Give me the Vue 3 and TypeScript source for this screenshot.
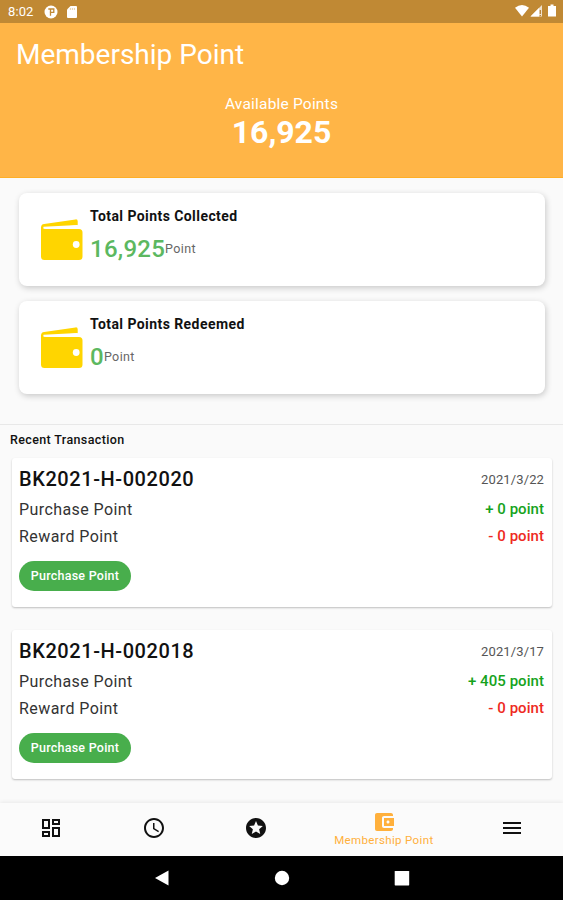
<script setup lang="ts">
interface Summary {
  title: string
  value: string
}

interface Transaction {
  code: string
  date: string
  purchase: string
  reward: string
}

interface NavItem {
  path: string
  label?: string
}

const summaries: Summary[] = [
  { title: 'Total Points Collected', value: '16,925' },
  { title: 'Total Points Redeemed', value: '0' },
]

const transactions: Transaction[] = [
  { code: 'BK2021-H-002020', date: '2021/3/22', purchase: '+ 0 point', reward: '- 0 point' },
  { code: 'BK2021-H-002018', date: '2021/3/17', purchase: '+ 405 point', reward: '- 0 point' },
]

const navItems: NavItem[] = [
  { path: 'M19 5v2h-4V5h4M9 5v6H5V5h4m10 8v6h-4v-6h4M9 17v2H5v-2h4M21 3h-8v6h8V3zM11 3H3v10h8V3zm10 8h-8v10h8V11zm-10 4H3v6h8v-6z' },
  { path: 'M11.99 2C6.47 2 2 6.48 2 12s4.47 10 9.99 10C17.52 22 22 17.52 22 12S17.52 2 11.99 2zM12 20c-4.42 0-8-3.58-8-8s3.58-8 8-8 8 3.58 8 8-3.58 8-8 8zm.5-13H11v6l5.25 3.15.75-1.23-4.5-2.67z' },
  { path: 'M11.99 2C6.47 2 2 6.48 2 12s4.47 10 9.99 10C17.52 22 22 17.52 22 12S17.52 2 11.99 2zm4.24 16L12 15.45 7.77 18l1.12-4.81-3.73-3.23 4.92-.42L12 5l1.92 4.53 4.92.42-3.73 3.23L16.23 18z' },
  {
    path: 'M21 18v1c0 1.1-.9 2-2 2H5c-1.11 0-2-.9-2-2V5c0-1.1.89-2 2-2h14c1.1 0 2 .9 2 2v1h-9c-1.11 0-2 .9-2 2v8c0 1.1.89 2 2 2h9zm-9-2h10V8H12v8zm4-2.5c-.83 0-1.5-.67-1.5-1.5s.67-1.5 1.5-1.5 1.5.67 1.5 1.5-.67 1.5-1.5 1.5z',
    label: 'Membership Point',
  },
  { path: 'M3 18h18v-2H3v2zm0-5h18v-2H3v2zm0-7v2h18V6H3z' },
]
</script>

<template>
  <div class="screen">
    <div class="status">
      <span class="time">8:02</span>
      <svg class="status-app" viewBox="0 0 14 14">
        <circle cx="7" cy="7" r="6.5" fill="#fff" />
        <path d="M4.300 4H9.800V7.300H6.500V10.800" fill="none" stroke="#c18a36" stroke-width="1.300" />
        <path d="M6.500 4v3.500" stroke="#c18a36" stroke-width="1.300" />
      </svg>
      <svg class="status-sd" viewBox="0 0 12 14">
        <path d="M4.5 1H10a1 1 0 0 1 1 1v10a1 1 0 0 1-1 1H2a1 1 0 0 1-1-1V4.5z" fill="#fff" />
        <path d="M4.4 3v2M6.4 3v2M8.4 3v2" stroke="#e0c59b" stroke-width=".8" />
      </svg>
      <svg class="status-right" viewBox="0 0 44 14">
        <path d="M1 3.800Q8-1.600 15 3.800L8 12.500z" fill="#fff" />
        <path d="M16.500 12.500 28 1v11.500z" fill="#fff" fill-opacity=".75" />
        <path d="M16.500 12.500 25 4v8.500z" fill="#fff" />
        <path d="M26.300 6v4M26.300 11v1" stroke="#b47c2c" stroke-width="1.200" />
        <path d="M36.500.500h3V2H42v10.500h-8V2h2.500z" fill="#fff" />
      </svg>
    </div>

    <header class="header">
      <h1 class="title">Membership Point</h1>
      <p class="available">Available Points</p>
      <p class="balance">16,925</p>
    </header>

    <section class="summaries">
      <article v-for="item in summaries" :key="item.title" class="summary">
        <svg class="wallet" viewBox="0 0 42 42">
          <path d="M0 8.500Q0 5.300 3.200 4.900L34.500 .4Q36.700 .1 36.700 2.300V6.300L2.500 9.300V10H38Q41.500 10 41.500 13.500V37.500Q41.500 41 38 41H3.500Q0 41 0 37.500z" fill="#ffd500" />
          <path d="M2.500 7.800 36.700 6v3.500H4Q1.800 9.500 2.500 7.800z" fill="#fff" />
          <circle cx="35.200" cy="25.500" r="3.400" fill="#fff" />
        </svg>
        <div class="summary-text">
          <h2 class="summary-title">{{ item.title }}</h2>
          <p class="summary-line"><span class="summary-value">{{ item.value }}</span><span class="unit">Point</span></p>
        </div>
      </article>
    </section>

    <section class="recent">
      <h3 class="recent-title">Recent Transaction</h3>
      <article v-for="tx in transactions" :key="tx.code" class="tx">
        <div class="row head"><span class="code">{{ tx.code }}</span><span class="date">{{ tx.date }}</span></div>
        <div class="row"><span class="kind">Purchase Point</span><span class="amount plus">{{ tx.purchase }}</span></div>
        <div class="row"><span class="kind">Reward Point</span><span class="amount minus">{{ tx.reward }}</span></div>
        <span class="chip">Purchase Point</span>
      </article>
    </section>

    <nav class="nav">
      <div v-for="(item, i) in navItems" :key="i" class="nav-item" :class="{ active: item.label }">
        <svg class="nav-icon" viewBox="0 0 24 24"><path :d="item.path" fill="currentColor" /></svg>
        <span v-if="item.label" class="nav-label">{{ item.label }}</span>
      </div>
    </nav>

    <footer class="system">
      <svg class="sys-icon" viewBox="0 0 16 16"><path d="M1 8 14.500 .500v15z" fill="#fff" /></svg>
      <svg class="sys-icon" viewBox="0 0 16 16"><circle cx="8" cy="8" r="7.200" fill="#fff" /></svg>
      <svg class="sys-icon" viewBox="0 0 16 16"><rect x=".7" y=".9" width="14.500" height="14.500" rx=".6" fill="#fff" /></svg>
    </footer>
  </div>
</template>

<style>
body {
  margin: 0;
  background: #fafafa;
}
</style>

<style scoped>
.screen {
  width: 563px;
  height: 900px;
  display: flex;
  flex-direction: column;
  overflow: hidden;
  background: #fafafa;
  font-family: Roboto, 'Liberation Sans', sans-serif;
}

h1, h2, h3, p {
  margin: 0;
}

.status {
  flex: none;
  height: 23px;
  box-sizing: border-box;
  padding: 0 6px 0 8px;
  display: flex;
  align-items: center;
  background: #c08934;
  color: #fff;
}

.time {
  width: 36px;
  font-size: 13px;
  line-height: 23px;
  letter-spacing: 0.1px;
}

.status-app {
  width: 14px;
  height: 14px;
  margin-top: 1px;
}

.status-sd {
  width: 12px;
  height: 14px;
  margin: 1px 0 0 8px;
}

.status-right {
  width: 44px;
  height: 14px;
  margin-left: auto;
  margin-right: -1px;
  margin-bottom: 1px;
}

.header {
  flex: none;
  height: 155px;
  box-sizing: border-box;
  border-bottom: 1px solid #ffaf26;
  background: #ffb547;
  color: #fff;
  display: flex;
  flex-direction: column;
}

.title {
  margin: 14px 0 0 16px;
  font-size: 28px;
  line-height: 36px;
  font-weight: 400;
}

.available {
  margin-top: 21px;
  text-align: center;
  font-size: 15.5px;
  line-height: 20px;
  letter-spacing: 0.2px;
}

.balance {
  text-align: center;
  font-size: 32px;
  line-height: 36px;
  font-weight: 700;
}

.summaries {
  flex: none;
  height: 247px;
  box-sizing: border-box;
  padding: 15px 18px 0 19px;
  display: flex;
  flex-direction: column;
  gap: 15px;
  border-bottom: 1px solid #e8e8e8;
}

.summary {
  height: 93px;
  box-sizing: border-box;
  border-radius: 8px;
  padding: 14px 0 0 22px;
  display: flex;
  background: #fff;
  box-shadow: 1px 2px 6px rgba(0, 0, 0, 0.2);
}

.wallet {
  width: 42px;
  height: 42px;
  margin: 12px 7px 0 0;
}

.summary-title {
  font-size: 14px;
  line-height: 18px;
  font-weight: 700;
  letter-spacing: 0.43px;
  color: #111;
}

.summary-line {
  display: flex;
  align-items: center;
  margin-top: 8px;
  line-height: 32px;
}

.summary-value {
  font-size: 24px;
  font-weight: 500;
  letter-spacing: 0.25px;
  color: #5cb860;
}

.unit {
  font-size: 12.5px;
  letter-spacing: 0.4px;
  color: #666;
}

.recent {
  flex: 1;
  display: flex;
  flex-direction: column;
  padding: 7px 11px 0 12px;
}

.recent-title {
  margin: 0 0 11px -2px;
  font-size: 12.5px;
  line-height: 15px;
  font-weight: 500;
  letter-spacing: 0.37px;
  color: #111;
}

.tx {
  flex: none;
  height: 149px;
  box-sizing: border-box;
  margin-bottom: 23px;
  border-radius: 3px;
  padding: 5px 8px 0 7px;
  display: flex;
  flex-direction: column;
  align-items: stretch;
  background: #fff;
  box-shadow: 0 1px 2px rgba(0, 0, 0, 0.24);
}

.row {
  display: flex;
  justify-content: space-between;
  align-items: center;
  height: 27px;
}

.head {
  height: 32px;
}

.code {
  font-size: 20px;
  font-weight: 500;
  letter-spacing: 0.57px;
  color: #111;
}

.date {
  font-size: 13px;
  letter-spacing: 0.12px;
  color: #555;
}

.kind {
  padding-top: 2px;
  font-size: 16px;
  letter-spacing: 0.42px;
  color: #333;
}

.amount {
  font-size: 15px;
  font-weight: 500;
  letter-spacing: 0.05px;
}

.plus {
  color: #16a31c;
}

.minus {
  color: #ee2a22;
}

.chip {
  align-self: flex-start;
  width: 112px;
  height: 30px;
  margin-top: 12px;
  border-radius: 15px;
  background: #48ae4c;
  color: #fff;
  font-size: 12.5px;
  font-weight: 500;
  letter-spacing: 0.25px;
  line-height: 30px;
  text-align: center;
}

.nav {
  flex: none;
  height: 53px;
  box-sizing: border-box;
  display: flex;
  background: #fbfbfb;
  box-shadow: 0 -1px 4px rgba(0, 0, 0, 0.07);
  color: #111;
}

.nav-item {
  flex: 1;
  display: flex;
  flex-direction: column;
  align-items: center;
  justify-content: center;
  padding-bottom: 3px;
}

.active {
  flex: 1.5;
  padding-bottom: 3px;
  color: #ffb03c;
}

.nav-icon {
  width: 24px;
  height: 24px;
}

.nav-label {
  font-size: 11.5px;
  line-height: 13px;
  letter-spacing: 0.35px;
}

.system {
  flex: none;
  height: 44px;
  display: flex;
  justify-content: center;
  align-items: center;
  gap: 104px;
  background: #000;
}

.sys-icon {
  width: 16px;
  height: 16px;
}
</style>
